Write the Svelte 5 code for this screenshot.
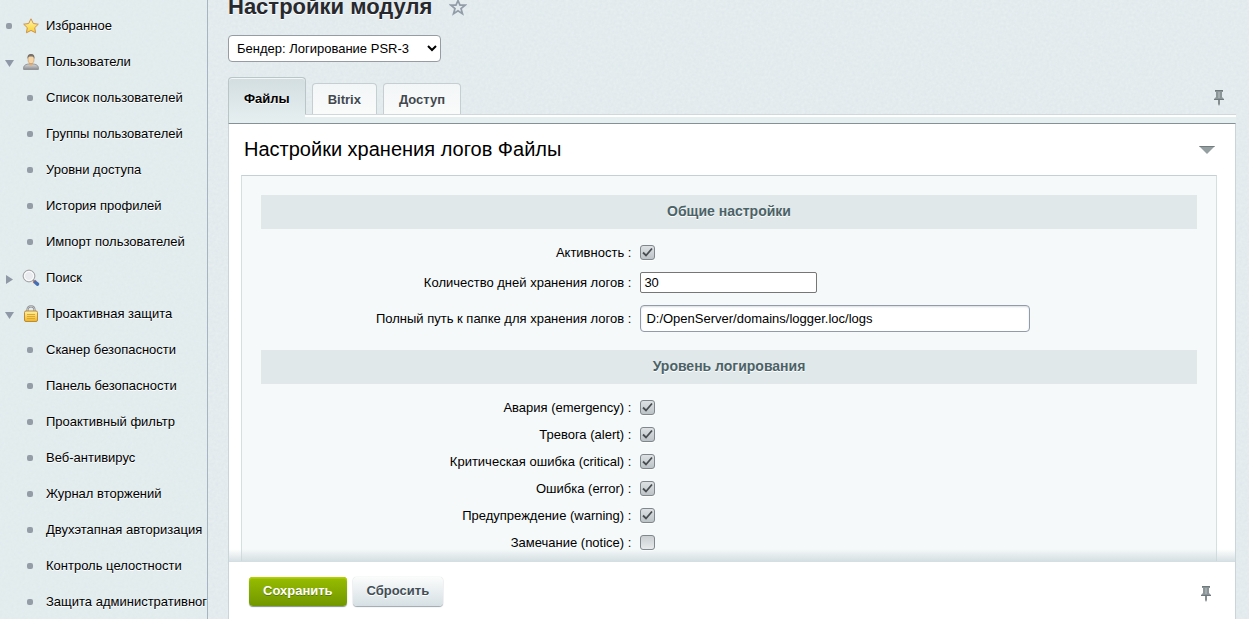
<script>
  let menu = [
    { text: 'Избранное', icon: 'star', mark: 'dot' },
    { text: 'Пользователи', icon: 'user', mark: 'down' },
    { text: 'Список пользователей' },
    { text: 'Группы пользователей' },
    { text: 'Уровни доступа' },
    { text: 'История профилей' },
    { text: 'Импорт пользователей' },
    { text: 'Поиск', icon: 'search', mark: 'right' },
    { text: 'Проактивная защита', icon: 'lock', mark: 'down' },
    { text: 'Сканер безопасности' },
    { text: 'Панель безопасности' },
    { text: 'Проактивный фильтр' },
    { text: 'Веб-антивирус' },
    { text: 'Журнал вторжений' },
    { text: 'Двухэтапная авторизация' },
    { text: 'Контроль целостности' },
    { text: 'Защита административного раздела' }
  ];
  let tabs = ['Файлы', 'Bitrix', 'Доступ'];
  let active = $state(0);
  let enabled = $state(true);
  let days = $state('30');
  let path = $state('D:/OpenServer/domains/logger.loc/logs');
  let levels = $state([
    { id: 'emergency', text: 'Авария (emergency)', on: true },
    { id: 'alert', text: 'Тревога (alert)', on: true },
    { id: 'critical', text: 'Критическая ошибка (critical)', on: true },
    { id: 'error', text: 'Ошибка (error)', on: true },
    { id: 'warning', text: 'Предупреждение (warning)', on: true },
    { id: 'notice', text: 'Замечание (notice)', on: false }
  ]);
</script>

{#snippet pin()}
  <svg width="12" height="18" viewBox="0 0 12 18" aria-hidden="true">
    <path d="M2 1h8v2H9v5l2 2v1H1v-1l2-2V3H2z" fill="#8b9497" />
    <path d="M2 1h8v1H2zM1 10h10v1H1z" fill="#6f787c" />
    <path d="M5 3h2v6H5z" fill="#a3abae" />
    <path d="M5 11h2v4l-1 2-1-2z" fill="#858d90" />
  </svg>
{/snippet}

<div class="app">
  <nav class="side" aria-label="Меню">
    {#each menu as item}
      <a class="item" class:child={!item.icon} href="#menu">
        {#if item.icon}
          <span class="mark">
            {#if item.mark === 'dot'}
              <i class="dot"></i>
            {:else if item.mark === 'down'}
              <svg class="arrow" width="9" height="7" viewBox="0 0 9 7" aria-hidden="true"><path d="M0 0h9L4.5 7z" fill="#8f98a6" /></svg>
            {:else}
              <svg class="arrow right" width="7" height="9" viewBox="0 0 7 9" aria-hidden="true"><path d="M0 0v9l7-4.5z" fill="#8f98a6" /></svg>
            {/if}
          </span>
          <svg class="icon" width="16" height="16" viewBox="0 0 16 16" aria-hidden="true">
            <defs>
              <linearGradient id="gold" x1="0" y1="0" x2="0" y2="1"><stop offset="0" stop-color="#fff2a0" /><stop offset="1" stop-color="#f0b51c" /></linearGradient>
              <linearGradient id="yellow" x1="0" y1="0" x2="0" y2="1"><stop offset="0" stop-color="#fff6b0" /><stop offset="1" stop-color="#fbd02c" /></linearGradient>
              <linearGradient id="gray" x1="0" y1="0" x2="0" y2="1"><stop offset="0" stop-color="#d6d7d9" /><stop offset="1" stop-color="#909194" /></linearGradient>
            </defs>
            {#if item.icon === 'star'}
              <path d="M8 .8l2.300 4.700 5 .7-3.600 3.500.9 5.100L8 12.400l-4.600 2.400.9-5.100L.7 6.200l5-.7z" fill="url(#yellow)" stroke="#cc9450" stroke-linejoin="round" />
            {:else if item.icon === 'user'}
              <path d="M.6 15.400c-.3-3.300 1-4.900 5-5.400h4.800c4 .5 5.300 2.100 5 5.400z" fill="url(#gray)" stroke="#838487" stroke-width=".8" />
              <path d="M6 8.500v2.300l2 1 2-1V8.500z" fill="#dfae78" />
              <ellipse cx="8" cy="5.300" rx="3" ry="4.300" fill="#f6d5a6" stroke="#b98955" stroke-width=".5" />
              <path d="M4.600 5C4.200 1.500 5.200 0 8 0s3.800 1.500 3.400 5C10.800 3.200 10.300 2.600 8 2.600S5.200 3.200 4.600 5z" fill="#77706a" />
            {:else if item.icon === 'search'}
              <path d="M9.500 9.500l2.200 2.200" stroke="#8d8f95" stroke-width="2" />
              <path d="M11 11l1.200 1.200" stroke="#dd6845" stroke-width="3.600" />
              <path d="M12.500 12.500l2 1.700" stroke="#456fb5" stroke-width="3.600" stroke-linecap="round" />
              <circle cx="6" cy="6" r="5.900" fill="#e4e6e9" stroke="#a09fa3" />
              <circle cx="6" cy="6" r="4.500" fill="#e9ebee" stroke="#fff" stroke-width="1" />
            {:else}
              <path d="M4.500 7V4C4.500 1.500 5.800.3 8 .3s3.500 1.200 3.500 3.700v3" fill="none" stroke="#8b8d91" stroke-width="2.200" />
              <path d="M4.500 7V4C4.500 1.500 5.800.3 8 .3s3.500 1.200 3.500 3.700v3" fill="none" stroke="#d2d4d6" stroke-width=".8" />
              <rect x="1.500" y="5" width="13" height="10.500" rx="1.500" fill="url(#gold)" stroke="#b98a3f" />
              <path d="M4 8.500h8M4 10.500h8M4 12.500h8" stroke="#dda832" />
            {/if}
          </svg>
        {:else}
          <i class="dot"></i>
        {/if}
        <span class="text">{item.text}</span>
      </a>
    {/each}
  </nav>

  <main>
    <header>
      <h1>Настройки модуля</h1>
      <button class="plain" aria-label="Добавить в избранное">
        <svg width="18" height="18" viewBox="0 0 18 18" aria-hidden="true"><path d="M9 2.500l2 4.700h5.100l-4.100 3.400 1.500 5.200L9 12.800l-4.500 3 1.500-5.200-4.100-3.400H7z" fill="none" stroke="#929da9" stroke-width="1.700" /></svg>
      </button>
    </header>

    <select class="module" aria-label="Модуль">
      <option>Бендер: Логирование PSR-3</option>
    </select>

    <div class="tabbar">
      <div class="tabs" role="tablist">
        {#each tabs as tab, i}
          <button class="tab" class:active={active === i} role="tab" aria-selected={active === i} onclick={() => (active = i)}>{tab}</button>
        {/each}
      </div>
      <button class="plain pin" aria-label="Закрепить вкладки">{@render pin()}</button>
    </div>

    <section class="panel">
      <div class="scroll">
        <div class="caption">
          <h2>Настройки хранения логов Файлы</h2>
          <button class="plain" aria-label="Свернуть">
            <svg width="16" height="8" viewBox="0 0 16 8" aria-hidden="true"><path d="M0 0h16L8 8z" fill="#959fa1" /><path d="M0 0h16l-1 1H1z" fill="#727b7d" /></svg>
          </button>
        </div>
        <form class="box" id="settings" onsubmit={(e) => e.preventDefault()}>
          <h3>Общие настройки</h3>
          <div class="rows">
            <div class="row">
              <label for="enabled">Активность :</label>
              <div><input id="enabled" type="checkbox" bind:checked={enabled} /></div>
            </div>
            <div class="row mid">
              <label for="days">Количество дней хранения логов :</label>
              <div><input id="days" class="days" type="text" bind:value={days} /></div>
            </div>
            <div class="row tall">
              <label for="path">Полный путь к папке для хранения логов :</label>
              <div><input id="path" class="path" type="text" bind:value={path} /></div>
            </div>
          </div>
          <h3>Уровень логирования</h3>
          <div class="rows">
            {#each levels as level}
              <div class="row">
                <label for={level.id}>{level.text} :</label>
                <div><input id={level.id} type="checkbox" bind:checked={level.on} /></div>
              </div>
            {/each}
          </div>
        </form>
      </div>
      <footer>
        <button class="btn save" type="submit" form="settings">Сохранить</button>
        <button class="btn reset" type="reset" form="settings">Сбросить</button>
        <button class="plain pin" aria-label="Закрепить панель">{@render pin()}</button>
      </footer>
    </section>
  </main>
</div>

<style>
  :global(body) {
    margin: 0;
    background: #e2eaed;
  }
  .app, .app * { box-sizing: border-box; }
  .app {
    display: flex;
    height: 100vh;
    overflow: hidden;
    font: 13px/18px "Liberation Sans", Arial, sans-serif;
    color: #000;
    background: #dfe8eb url("data:image/svg+xml,%3Csvg xmlns='http://www.w3.org/2000/svg' width='128' height='128'%3E%3Cfilter id='n'%3E%3CfeTurbulence type='fractalNoise' baseFrequency='.35' numOctaves='2' stitchTiles='stitch'/%3E%3CfeColorMatrix values='0 0 0 0 1 0 0 0 0 1 0 0 0 0 1 .4 0 0 0 -.06'/%3E%3C/filter%3E%3Crect width='128' height='128' filter='url(%23n)'/%3E%3C/svg%3E");
  }
  button, input, select { font-family: inherit; }
  .plain {
    display: flex;
    padding: 0;
    border: 0;
    background: none;
  }
  .side {
    flex: none;
    width: 208px;
    padding-top: 8px;
    overflow: hidden;
    border-right: 1px solid #a5b4c3;
    background: rgba(226, 238, 238, .5);
  }
  .item {
    display: flex;
    align-items: center;
    height: 36px;
    padding-left: 5px;
    color: #000;
    text-decoration: none;
    white-space: nowrap;
    text-shadow: 0 1px #fff;
  }
  .child { padding-left: 27px; }
  .mark {
    display: flex;
    align-items: center;
    width: 18px;
    height: 18px;
  }
  .arrow { margin-top: 2px; }
  .arrow.right { margin-left: 1px; }
  .icon { margin-right: 7px; overflow: visible; }
  .dot {
    flex: none;
    width: 6px;
    height: 6px;
    margin-right: 13px;
    border-radius: 2px;
    background: #949da6;
  }
  .mark .dot { margin: 0 0 0 1px; }
  main {
    flex: 1;
    min-width: 0;
    display: flex;
    flex-direction: column;
    padding: 0 13px 0 20px;
  }
  header {
    display: flex;
    align-items: center;
    gap: 17px;
    height: 28px;
    margin-top: -7px;
  }
  h1 {
    margin: 0;
    font-size: 22px;
    line-height: 28px;
    color: #27292f;
    text-shadow: 0 1px #fff;
  }
  .module {
    align-self: flex-start;
    width: 213px;
    height: 27px;
    margin-top: 14px;
    padding: 0 4px;
    border: 1px solid #959ca3;
    border-radius: 4px;
    background: #fff;
    color: #000;
    font-size: 13px;
  }
  .tabbar {
    position: relative;
    display: flex;
    justify-content: space-between;
    height: 46px;
    margin-top: 15px;
    padding-bottom: 6px;
  }
  .tabbar::after {
    content: "";
    position: absolute;
    left: 77px;
    right: 0;
    bottom: 0;
    height: 6px;
    border-top: 2px solid #fff;
    background: #e6eff0;
    box-shadow: 0 -1px #cfd9dc;
  }
  .tabs {
    display: flex;
    align-items: flex-end;
    gap: 6px;
  }
  .tab {
    height: 34px;
    padding: 0 15px 2px;
    border: 1px solid #c5cfd2;
    border-bottom: 0;
    border-radius: 4px 4px 0 0;
    background: linear-gradient(#f3f6f7, #fafbfb);
    color: #42484e;
    font-size: 13px;
    font-weight: bold;
    text-shadow: 0 1px #fff;
  }
  .tab.active {
    height: 46px;
    margin-bottom: -6px;
    padding-bottom: 5px;
    border-color: #bac5c8;
    background: linear-gradient(#d3dee1, #e6eff0);
    box-shadow: inset 0 1px #f2f6f7;
    color: #000;
  }
  .tabbar .pin { align-self: flex-start; margin: 12px 11px 0 0; }
  .panel {
    flex: 1;
    min-height: 0;
    display: flex;
    flex-direction: column;
    border: 1px solid #c9d5d9;
    border-top: 1px solid #869197;
    border-bottom: 0;
    background: #fff;
  }
  .scroll {
    flex: 1;
    min-height: 0;
    position: relative;
    overflow: hidden;
    padding: 0 18px 0 12px;
  }
  .scroll::after {
    content: "";
    position: absolute;
    left: 0;
    right: 0;
    bottom: 0;
    height: 12px;
    background: linear-gradient(rgba(200, 212, 217, 0), rgba(200, 212, 217, .7));
  }
  .caption {
    display: flex;
    align-items: center;
    justify-content: space-between;
    height: 51px;
    padding: 0 2px 0 3px;
  }
  h2 {
    margin: 0;
    padding-bottom: 2px;
    font-size: 20px;
    font-weight: normal;
    line-height: 24px;
  }
  .box {
    min-height: 600px;
    padding: 19px;
    border: 1px solid #c4d0d3;
    border-right-color: #d5dfe2;
    border-left-color: #d5dfe2;
    background: #f5f9f9;
  }
  h3 {
    margin: 0;
    padding-bottom: 2px;
    font-size: 14px;
    line-height: 32px;
    text-align: center;
    color: #4b6267;
    background: #e0e8ea;
    text-shadow: 0 1px #fff;
  }
  .rows { padding: 10px 0 12px; }
  .row {
    display: grid;
    grid-template-columns: 40% 60%;
    align-items: center;
    height: 27px;
  }
  .row.mid { height: 33px; }
  .row.tall { height: 39px; }
  .row label { padding-right: 4px; text-align: right; }
  .row > div { display: flex; padding-left: 5px; }
  input[type="checkbox"] {
    appearance: none;
    width: 15px;
    height: 15px;
    margin: 0;
    border: 1px solid #7e878c;
    border-radius: 3px;
    background: linear-gradient(#c9ced1, #e8eaeb);
    box-shadow: 0 1px #fff;
  }
  input[type="checkbox"]:checked {
    background: url("data:image/svg+xml,%3Csvg xmlns='http://www.w3.org/2000/svg' width='13' height='13'%3E%3Cpath d='M2 6.500L5 9.500 11 2.500' fill='none' stroke='%23484d51' stroke-width='1.800'/%3E%3C/svg%3E"), linear-gradient(#dde1e3, #bcc3c7);
  }
  .days {
    width: 177px;
    height: 21px;
    padding: 0 3px;
    border: 1px solid #767676;
    border-radius: 2px;
    background: #fff;
    font-size: 13px;
  }
  .path {
    width: 390px;
    height: 27px;
    padding: 0 5px;
    border: 1px solid #929baa;
    border-radius: 4px;
    background: #fff;
    box-shadow: inset 0 1px 2px #d8dde0;
    font-size: 13px;
  }
  footer {
    display: flex;
    align-items: center;
    gap: 6px;
    height: 58px;
    padding: 0 23px 0 20px;
    border-top: 1px solid #d3dfe4;
    background: #fff;
  }
  footer .pin { margin: 6px 0 0 auto; }
  .btn {
    height: 29px;
    margin-top: 1px;
    padding: 0 14px 2px;
    border: 0;
    border-radius: 4px;
    font-size: 13px;
    font-weight: bold;
  }
  .save {
    color: #fff;
    background: linear-gradient(#98bd00, #719700);
    box-shadow: inset 0 1px #b5d000, inset 0 2px #a5c800, 0 1px 1px #87938c;
    text-shadow: 0 1px #5d7a00;
  }
  .reset {
    color: #424d56;
    background: linear-gradient(#fbfcfc, #d6e0e4);
    box-shadow: 0 0 1px #b5bfc3, 0 1px 1px #9aa4a8;
    text-shadow: 0 1px #fff;
  }
</style>
